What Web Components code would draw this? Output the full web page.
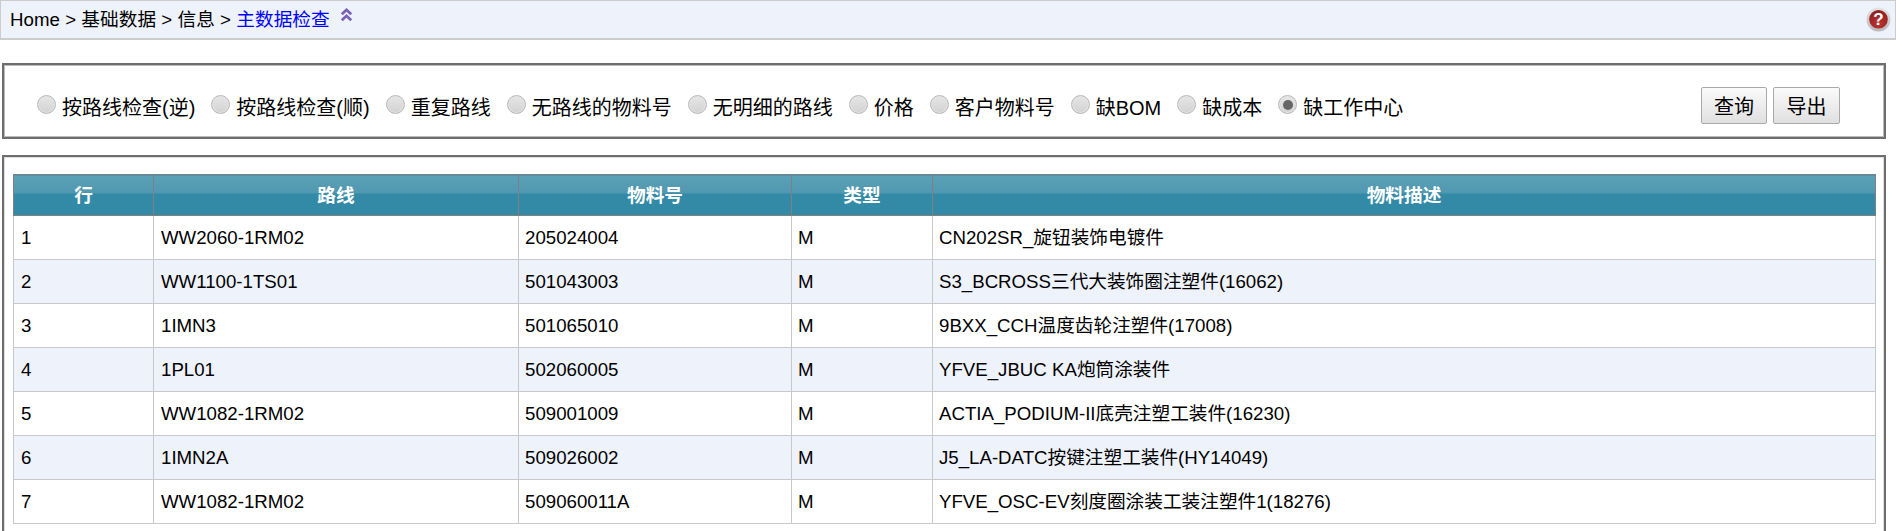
<!DOCTYPE html>
<html lang="zh"><head><meta charset="utf-8"><title>主数据检查</title>
<style>
html,body{margin:0;padding:0;background:#fff;height:531px;overflow:hidden}
body{font:18.67px "Liberation Sans","Noto Sans CJK SC",sans-serif;color:#000}
</style></head><body>
<crumb-bar></crumb-bar>
<filter-panel></filter-panel>
<result-panel></result-panel>
<script>
const FONT='"Liberation Sans","Noto Sans CJK SC",sans-serif';
class CrumbBar extends HTMLElement{constructor(){super();this.attachShadow({mode:'open'}).innerHTML=`
<style>
:host{display:flex;align-items:flex-start;box-sizing:border-box;height:40px;background:#eef2fb;border:1px solid #ccc;border-width:1px 1px 2px 1px;padding:0 4px 0 9px;font:18.67px ${FONT}}
.t{margin-top:5px;line-height:28px;letter-spacing:.04px}
a{color:#00f;text-decoration:none}
.up{margin:6px 0 0 10px;width:13px;height:15px}
.sp{flex:1}
.help{margin-top:6px;width:25px;height:25px}
</style>
<span class="t">Home &gt; 基础数据 &gt; 信息 &gt; <a href="#">主数据检查</a></span>
<svg class="up" viewBox="0 0 13 15"><path d="M1.8 7.2 6.5 2.8 11.2 7.2M1.8 13.2 6.5 8.8 11.2 13.2" fill="none" stroke="#7a60b6" stroke-width="2.8"/></svg>
<span class="sp"></span>
<svg class="help" viewBox="0 0 25 25"><defs><linearGradient id="g" x1="0" y1="0" x2="0" y2="1"><stop offset="0" stop-color="#e4e4e4"/><stop offset="1" stop-color="#b8b8b8"/></linearGradient><radialGradient id="h" cx=".5" cy=".75" r=".7"><stop offset="0" stop-color="#bd3530"/><stop offset="1" stop-color="#8f1f1e"/></radialGradient></defs><circle cx="12.5" cy="12.5" r="12" fill="url(#g)"/><circle cx="12.5" cy="12.3" r="9.3" fill="url(#h)"/><text x="12.5" y="18.3" text-anchor="middle" font-family="Liberation Sans" font-weight="700" font-size="17" fill="#fff">?</text></svg>`}}
customElements.define('crumb-bar',CrumbBar);

class RadioOpt extends HTMLElement{constructor(){super();this.attachShadow({mode:'open'}).innerHTML=`
<style>
:host{display:inline-flex;align-items:flex-start;margin-right:16px}
.r{box-sizing:border-box;width:19px;height:19px;border-radius:50%;border:1px solid #b8b8b8;background:linear-gradient(#e6e6e6,#d2d2d2);margin-right:6px;display:flex;align-items:center;justify-content:center;box-shadow:inset 0 0 0 1px #e4e4e4}
:host([checked]) .r::after{content:"";width:10px;height:10px;border-radius:50%;background:#666}
.l{line-height:28px;margin-top:-1px}
</style><span class="r"></span><span class="l"><slot></slot></span>`}}
customElements.define('radio-opt',RadioOpt);

class AppButton extends HTMLElement{constructor(){super();this.attachShadow({mode:'open'}).innerHTML=`
<style>
:host{display:inline-flex;align-items:center;justify-content:center;box-sizing:border-box;width:67px;height:37px;border:1px solid #aaa;border-radius:2px;background:linear-gradient(#fafafa,#e0e0e0);font-size:20px}
</style><slot></slot>`}}
customElements.define('app-button',AppButton);

class FilterPanel extends HTMLElement{constructor(){super();this.attachShadow({mode:'open'}).innerHTML=`
<style>
:host{display:flex;box-sizing:border-box;margin:23px 10px 0 2px;height:76px;border:2px solid #6e6e6e;box-shadow:inset 0 0 0 1px #bbb;padding:30px 44px 0 33px;font:20px ${FONT}}
.opts{flex:1;display:flex;white-space:nowrap}
.btns{display:flex;gap:6px;margin-top:-8px}
</style>
<div class="opts">
<radio-opt>按路线检查(逆)</radio-opt><radio-opt>按路线检查(顺)</radio-opt><radio-opt>重复路线</radio-opt><radio-opt>无路线的物料号</radio-opt><radio-opt>无明细的路线</radio-opt><radio-opt>价格</radio-opt><radio-opt>客户物料号</radio-opt><radio-opt>缺BOM</radio-opt><radio-opt>缺成本</radio-opt><radio-opt checked>缺工作中心</radio-opt>
</div>
<div class="btns"><app-button style="width:66px">查询</app-button><app-button>导出</app-button></div>`}}
customElements.define('filter-panel',FilterPanel);

const ROWS=[
['1','WW2060-1RM02','205024004','M','CN202SR_旋钮装饰电镀件'],
['2','WW1100-1TS01','501043003','M','S3_BCROSS三代大装饰圈注塑件(16062)'],
['3','1IMN3','501065010','M','9BXX_CCH温度齿轮注塑件(17008)'],
['4','1PL01','502060005','M','YFVE_JBUC KA炮筒涂装件'],
['5','WW1082-1RM02','509001009','M','ACTIA_PODIUM-II底壳注塑工装件(16230)'],
['6','1IMN2A','509026002','M','J5_LA-DATC按键注塑工装件(HY14049)'],
['7','WW1082-1RM02','509060011A','M','YFVE_OSC-EV刻度圈涂装工装注塑件1(18276)']];
class ResultPanel extends HTMLElement{constructor(){super();this.attachShadow({mode:'open'}).innerHTML=`
<style>
:host{display:block;box-sizing:border-box;margin:16px 10px 0 2px;height:380px;border:2px solid #6e6e6e;box-shadow:inset 0 0 0 1px #ddd;padding:17px 9px 0 9px;font:18.67px ${FONT}}
table{border-collapse:collapse;table-layout:fixed;width:1863px}
th{height:41px;padding:1px 0 0;color:#fff;font-weight:700;text-align:center;border:1px solid #808080;background:linear-gradient(#5ba0b6 0,#5098b0 45%,#338aa7 46%,#338aa7 100%);box-sizing:border-box;line-height:28px}
td{height:44px;box-sizing:border-box;padding:0 6px;border:1px solid #c8c8c8;white-space:nowrap;line-height:28px}
td:nth-child(-n+2){padding-left:7px}
tr:nth-child(even) td{background:#eef2fb}
</style>
<table><colgroup><col style="width:140px"><col style="width:365px"><col style="width:273px"><col style="width:141px"><col></colgroup>
<thead><tr><th>行</th><th>路线</th><th>物料号</th><th>类型</th><th>物料描述</th></tr></thead>
<tbody>${ROWS.map(r=>'<tr>'+r.map(c=>`<td>${c}</td>`).join('')+'</tr>').join('')}</tbody></table>`}}
customElements.define('result-panel',ResultPanel);
</script>
</body></html>
